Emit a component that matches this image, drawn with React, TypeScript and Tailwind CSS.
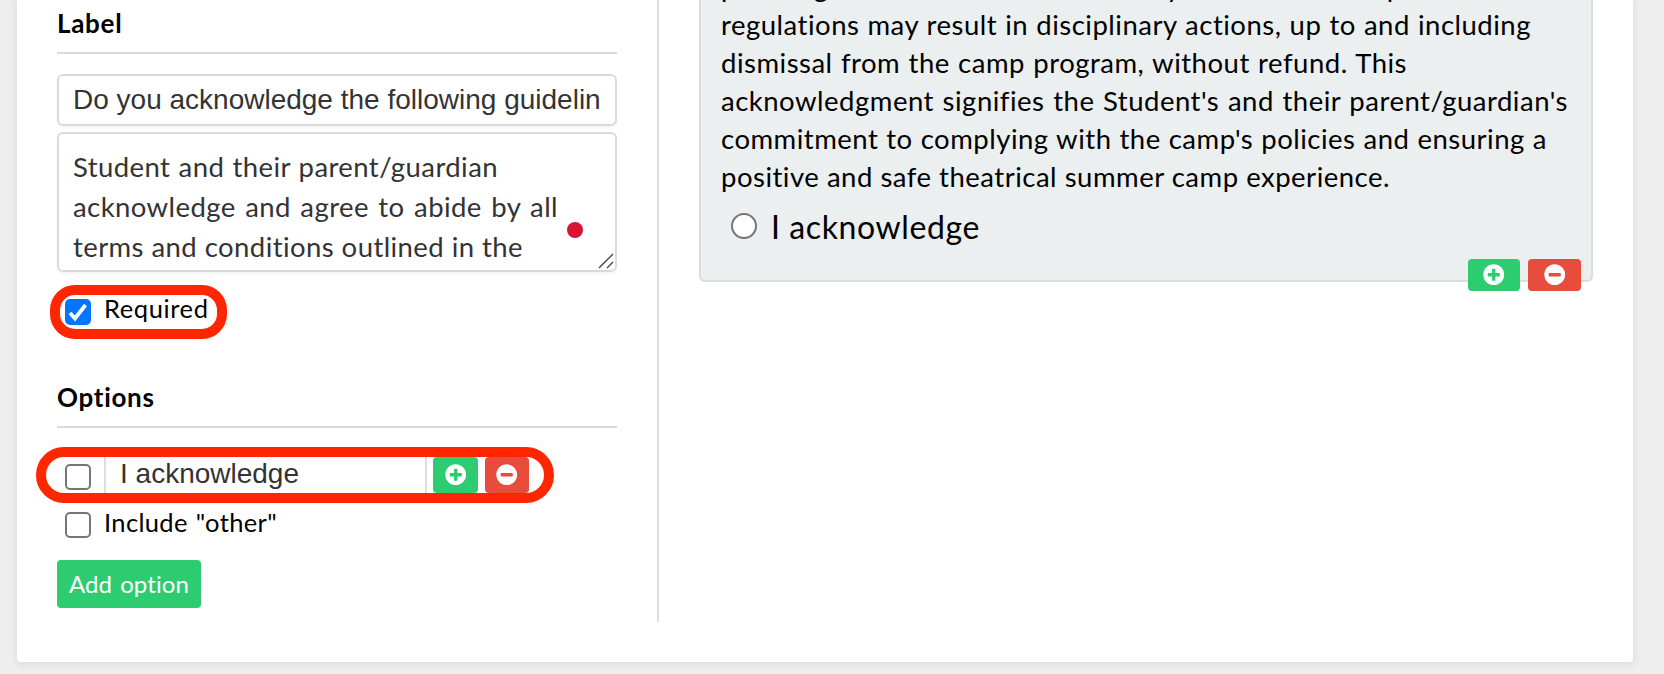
import { FaPlusCircle, FaMinusCircle } from 'react-icons/fa'

const previewLines = [
  { text: 'parent/guardian understand that any violation of camp rules or', width: 'w-[784px]' },
  { text: 'regulations may result in disciplinary actions, up to and including', width: 'w-[810px]' },
  { text: 'dismissal from the camp program, without refund. This', width: 'w-[686px]' },
  { text: "acknowledgment signifies the Student's and their parent/guardian's", width: 'w-[847px]' },
  { text: "commitment to complying with the camp's policies and ensuring a", width: 'w-[826px]' },
  { text: 'positive and safe theatrical summer camp experience.', width: 'w-[669px]' },
]

const descriptionLines = [
  { text: 'Student and their parent/guardian', width: 'w-[425px]' },
  { text: 'acknowledge and agree to abide by all', width: 'w-[485px]' },
  { text: 'terms and conditions outlined in the', width: 'w-[450px]' },
]

function EmptyCheckbox() {
  return <span className="block size-[26px] shrink-0 rounded-[5px] border-2 border-[#767676] bg-white" />
}

function Heading({ children }: { children: string }) {
  return (
    <h3 className="h-[54px] border-b-2 border-[#dadada] text-[26px] leading-[46px] font-bold tracking-[0.7px] text-black">
      {children}
    </h3>
  )
}

export default function App() {
  return (
    <div className="h-[674px] overflow-hidden bg-[#eeeeee] pl-[17px] font-['Lato',sans-serif]">
      <div className="flex h-[662px] w-[1616px] rounded-b-[4px] bg-white pl-10 shadow-[0_2px_6px_2px_rgba(0,0,0,0.06)]">
        {/* field editor */}
        <section className="h-[622px] w-[602px] shrink-0 border-r-2 border-[#dddddd]">
          <div className="w-[560px]">
            <Heading>Label</Heading>
            <div className="mt-[20px] flex h-[52px] items-center overflow-hidden rounded-[6px] border-2 border-[#dadada] pl-[14px] font-['Liberation_Sans',Arial,sans-serif] text-[28px] whitespace-nowrap text-[#333333] shadow-[0_2px_3px_rgba(0,0,0,0.04)]">
              Do you acknowledge the following guidelin
            </div>
            <div className="relative mt-[6px] h-[140px] rounded-[6px] border-2 border-[#dadada] pt-[13px] pl-[14px] text-[27.5px] leading-[40px] tracking-[0.42px] text-[#333333] shadow-[0_2px_3px_rgba(0,0,0,0.04)]">
              {descriptionLines.map((line) => (
                <p key={line.text} className={`${line.width} whitespace-nowrap [text-align-last:justify]`}>{line.text}</p>
              ))}
              <span className="absolute top-[88px] left-[508px] size-4 rounded-full bg-[#d81235]" />
              <svg className="absolute right-[1px] bottom-[1px]" width="16" height="16" viewBox="0 0 16 16" stroke="#444" strokeWidth="1.4">
                <path d="M1 15 15 1M9 15l6-6" />
              </svg>
            </div>

            <div className="-ml-[7px] mt-[13px] flex h-[54px] w-[177px] rounded-[25px] border-[10px] border-[#ff2600] pt-[4px] pl-[5px]">
              <span className="flex size-[26px] items-center justify-center rounded-[5px] bg-[#0075ff]">
                <svg width="20" height="20" viewBox="0 0 20 20" fill="none" stroke="white" strokeWidth="3.8">
                  <path d="m2 11 5 5.5L17.5 3" />
                </svg>
              </span>
              <span className="mt-[-9px] ml-[13px] w-[105px] text-[25.5px] leading-[36px] tracking-[0.6px] whitespace-nowrap text-black">
                Required
              </span>
            </div>
          </div>

          <div className="mt-[35px] w-[560px]">
            <Heading>Options</Heading>
            <div className="-ml-[21px] mt-[19px] flex h-[56px] w-[518px] rounded-[28px] border-[10px] border-[#ff2600]">
              <span className="mt-[7px] ml-[19px]">
                <EmptyCheckbox />
              </span>
              <span className="ml-[13px] h-9 w-[323px] border-r-2 border-l-2 border-[#dddddd] pl-[14px] font-['Liberation_Sans',Arial,sans-serif] text-[28px] leading-[34px] text-[#333333]">
                I acknowledge
              </span>
              <span className="ml-[6px] flex h-9 w-[45px] items-center justify-center rounded-[4px] bg-[#2ecc71] pb-[1px] text-white">
                <FaPlusCircle size={21.5} />
              </span>
              <span className="ml-[7px] flex h-9 w-[44px] items-center justify-center rounded-[4px] bg-[#e74c3c] pb-[1px] text-white">
                <FaMinusCircle size={21.5} />
              </span>
            </div>
            <div className="mt-[9px] flex pl-[8px]">
              <EmptyCheckbox />
              <span className="mt-[-8px] ml-[13px] w-[173px] text-[25.5px] leading-[36px] tracking-[0.35px] whitespace-nowrap text-black [text-align-last:justify]">
                Include "other"
              </span>
            </div>
            <button className="mt-[20px] block h-12 w-[144px] rounded-[4px] bg-[#2ecc71] px-[12px] text-[24px] leading-[46px] tracking-[0.1px] whitespace-nowrap text-white [text-align-last:justify]">
              Add option
            </button>
          </div>
        </section>

        {/* preview of the field */}
        <section className="relative ml-[40px] h-[282px] w-[894px] rounded-b-[6px] border-2 border-t-0 border-[#d9dddd] bg-[#ebefef] pl-[20px] text-[27.5px] leading-[38px] text-black">
          <div className="-mt-[32px] tracking-[0.5px]">
            {previewLines.map((line) => (
              <p key={line.text} className={`${line.width} whitespace-nowrap [text-align-last:justify]`}>{line.text}</p>
            ))}
          </div>
          <div className="mt-[11px] flex items-start pl-[10px]">
            <span className="mt-[6px] size-[26px] rounded-full border-2 border-[#767676] bg-white" />
            <span className="mt-[1px] ml-[14px] w-[208px] text-[32px] tracking-[0.6px] whitespace-nowrap [text-align-last:justify]">
              I acknowledge
            </span>
          </div>
          <div className="absolute right-[10px] bottom-[-11px] flex gap-2 text-white">
            <span className="flex h-8 w-[52px] items-center justify-center rounded-[4px] bg-[#2ecc71] pb-[1px]">
              <FaPlusCircle size={21.5} />
            </span>
            <span className="flex h-8 w-[53px] items-center justify-center rounded-[4px] bg-[#e74c3c] pb-[1px]">
              <FaMinusCircle size={21.5} />
            </span>
          </div>
        </section>
      </div>
    </div>
  )
}
